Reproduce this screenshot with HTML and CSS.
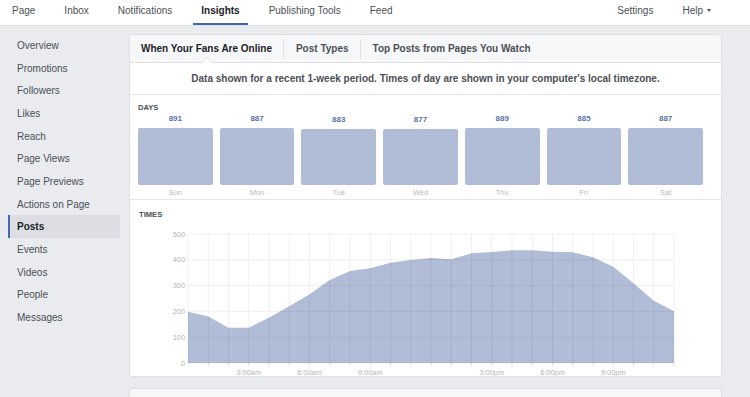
FILE: index.html
```html
<!DOCTYPE html>
<html lang="en">
<head>
    <meta charset="UTF-8">
    <meta name="viewport" content="width=device-width, initial-scale=1.0">
    <title>Insights</title>
    <link rel="stylesheet" href="styles.css">
</head>
<body>
    <nav class="topbar">
        <div class="topbar-group">
            <a class="nav-item">Page</a>
            <a class="nav-item">Inbox</a>
            <a class="nav-item">Notifications</a>
            <a class="nav-item active">Insights</a>
            <a class="nav-item">Publishing Tools</a>
            <a class="nav-item">Feed</a>
        </div>
        <div class="topbar-group">
            <a class="nav-item">Settings</a>
            <a class="nav-item">Help<span class="caret"></span></a>
        </div>
    </nav>

    <div class="main">
        <ul class="sidebar">
            <li>Overview</li>
            <li>Promotions</li>
            <li>Followers</li>
            <li>Likes</li>
            <li>Reach</li>
            <li>Page Views</li>
            <li>Page Previews</li>
            <li>Actions on Page</li>
            <li class="selected">Posts</li>
            <li>Events</li>
            <li>Videos</li>
            <li>People</li>
            <li>Messages</li>
        </ul>

        <div class="content">
            <div class="card">
                <div class="tabs">
                    <div class="tab active">When Your Fans Are Online</div>
                    <span class="tab-sep"></span>
                    <div class="tab">Post Types</div>
                    <span class="tab-sep"></span>
                    <div class="tab">Top Posts from Pages You Watch</div>
                </div>

                <div class="info">Data shown for a recent 1-week period. Times of day are shown in your computer's local timezone.</div>

                <div class="days">
                    <div class="section-label">DAYS</div>
                    <div class="day-bars">
                        <div class="day">
                            <div class="day-plot"><span class="day-value">891</span><div class="day-bar" style="height:57px"></div></div>
                            <span class="day-name">Sun</span>
                        </div>
                        <div class="day">
                            <div class="day-plot"><span class="day-value">887</span><div class="day-bar" style="height:56.7px"></div></div>
                            <span class="day-name">Mon</span>
                        </div>
                        <div class="day">
                            <div class="day-plot"><span class="day-value">883</span><div class="day-bar" style="height:56.5px"></div></div>
                            <span class="day-name">Tue</span>
                        </div>
                        <div class="day">
                            <div class="day-plot"><span class="day-value">877</span><div class="day-bar" style="height:56.1px"></div></div>
                            <span class="day-name">Wed</span>
                        </div>
                        <div class="day">
                            <div class="day-plot"><span class="day-value">889</span><div class="day-bar" style="height:56.9px"></div></div>
                            <span class="day-name">Thu</span>
                        </div>
                        <div class="day">
                            <div class="day-plot"><span class="day-value">885</span><div class="day-bar" style="height:56.6px"></div></div>
                            <span class="day-name">Fri</span>
                        </div>
                        <div class="day">
                            <div class="day-plot"><span class="day-value">887</span><div class="day-bar" style="height:56.7px"></div></div>
                            <span class="day-name">Sat</span>
                        </div>
                    </div>
                </div>

                <div class="times">
                    <div class="section-label">TIMES</div>
                    <svg class="times-chart" width="591" height="157" viewBox="0 0 591 157">
                        <!-- area -->
                        <polygon class="area" points="58,144 58,92.66 78.25,97.56 98.5,108.65 118.75,108.65 139,98.85 159.25,87.24 179.5,75.37 199.75,60.92 220,51.89 240.25,49.31 260.5,43.64 280.75,41.06 301,38.99 321.25,40.28 341.5,34.35 361.75,33.06 382,31.25 402.25,31.25 422.5,32.8 442.75,33.32 463,38.22 483.25,47.77 503.5,64.28 523.75,81.82 544,92.14 544,144"/>
                        <g id="grid" class="grid"></g>
                        <g class="y-labels">
                            <text x="55" y="15" dy="0.35em">500</text>
                            <text x="55" y="40.8" dy="0.35em">400</text>
                            <text x="55" y="66.6" dy="0.35em">300</text>
                            <text x="55" y="92.4" dy="0.35em">200</text>
                            <text x="55" y="118.2" dy="0.35em">100</text>
                            <text x="55" y="144" dy="0.35em">0</text>
                        </g>
                        <g class="x-labels">
                            <text x="118.75" y="155.5">3:00am</text>
                            <text x="179.5" y="155.5">6:00am</text>
                            <text x="240.25" y="155.5">9:00am</text>
                            <text x="361.75" y="155.5">3:00pm</text>
                            <text x="422.5" y="155.5">6:00pm</text>
                            <text x="483.25" y="155.5">9:00pm</text>
                        </g>
                    </svg>
                </div>
            </div>

            <div class="card card-next"></div>
        </div>
    </div>

    <script>
        // hour grid + ticks
        const grid = document.getElementById('grid');
        const ns = 'http://www.w3.org/2000/svg';

        function addLine(x1, y1, x2, y2, cls) {
            const line = document.createElementNS(ns, 'line');
            line.setAttribute('x1', x1);
            line.setAttribute('y1', y1);
            line.setAttribute('x2', x2);
            line.setAttribute('y2', y2);
            line.setAttribute('class', cls);
            grid.appendChild(line);
        }

        for (let h = 0; h <= 24; h++) {
            const x = 58 + h * 20.25;
            addLine(x, 15, x, 144, 'grid-line');
            addLine(x, 144, x, 147, 'tick');
        }

        for (let v = 0; v <= 500; v += 100) {
            const y = 144 - v * 0.258;
            addLine(58, y, 544, y, 'grid-line');
        }
    </script>
</body>
</html>
```

FILE: styles.css
```css
html,
body {
    overflow: hidden;
}

body {
    margin: 0;
    background-color: #e9ebee;
    font-family: "Liberation Sans", Arial, sans-serif;
    font-size: 10px;
    color: #4b4f56;
}

.topbar {
    display: flex;
    justify-content: space-between;
    height: 25px;
    padding: 0 31px 0 4px;
    background-color: #fff;
    border-bottom: 1px solid #dddfe2;
}

.topbar-group {
    display: flex;
    gap: 13px;
}

.nav-item {
    display: block;
    box-sizing: border-box;
    height: 25px;
    padding: 6px 8px 0;
    line-height: 10px;
    color: #4b4f56;
    cursor: pointer;
}

.nav-item.active {
    font-weight: bold;
    color: #1d2129;
    border-bottom: 2px solid #4267b2;
}

.caret {
    display: inline-block;
    margin-left: 4px;
    vertical-align: 2px;
    border-left: 2.5px solid transparent;
    border-right: 2.5px solid transparent;
    border-top: 3px solid #4b4f56;
}

.main {
    display: flex;
    gap: 9px;
    padding: 8px 0 0 8px;
}

.sidebar {
    width: 112px;
    margin: 0;
    padding: 0;
    list-style: none;
}

.sidebar li {
    height: 22.67px;
    line-height: 23.5px;
    padding-left: 7px;
    border-left: 2px solid transparent;
    cursor: pointer;
}

.sidebar li.selected {
    background-color: #dcdee3;
    border-left-color: #4267b2;
    font-weight: bold;
    color: #1d2129;
}

.content {
    width: 593px;
}

.card {
    box-sizing: border-box;
    background-color: #fff;
    border: 1px solid #dddfe2;
    border-radius: 3px;
}

.tabs {
    display: flex;
    align-items: center;
    height: 27px;
    background-color: #f6f7f9;
    border-bottom: 1px solid #dddfe2;
    border-radius: 3px 3px 0 0;
}

.tab {
    position: relative;
    padding: 0 11.5px;
    line-height: 27px;
    font-weight: bold;
    color: #4b4f56;
    cursor: pointer;
}

.tab:first-child {
    padding-left: 11px;
}

.tab.active {
    color: #1d2129;
}

.tab.active::before,
.tab.active::after {
    content: "";
    position: absolute;
    left: 50%;
    border-style: solid;
    border-color: transparent;
    border-top: 0;
}

.tab.active::before {
    bottom: -1px;
    margin-left: -6px;
    border-width: 0 6px 6px;
    border-bottom-color: #dddfe2;
}

.tab.active::after {
    bottom: -1px;
    margin-left: -5px;
    border-width: 0 5px 5px;
    border-bottom-color: #fff;
}

.tab-sep {
    width: 1px;
    height: 20px;
    background-color: #dddfe2;
}

.info {
    height: 31px;
    line-height: 31px;
    text-align: center;
    font-weight: bold;
    color: #4b4f56;
    border-bottom: 1px solid #e5e6e9;
}

.section-label {
    font-size: 7.6px;
    font-weight: bold;
    color: #4b4f56;
}

.days {
    padding: 8px 18px 1px 8px;
    border-bottom: 1px solid #e5e6e9;
}

.days .section-label {
    line-height: 10px;
}

.day-bars {
    display: grid;
    grid-template-columns: repeat(7, 1fr);
    gap: 7px;
}

.day {
    display: flex;
    flex-direction: column;
}

.day-plot {
    display: flex;
    flex-direction: column;
    justify-content: flex-end;
    height: 72px;
}

.day-value {
    margin-bottom: 4px;
    line-height: 10px;
    text-align: center;
    font-size: 8px;
    font-weight: bold;
    color: #5b72a6;
}

.day-bar {
    background-color: #b1bcd7;
    border-radius: 2px;
}

.day-name {
    margin-top: 3px;
    line-height: 10px;
    text-align: center;
    font-size: 7.4px;
    color: #b5b9c0;
}

.times {
    padding-top: 10px;
}

.times .section-label {
    line-height: 9px;
    padding-left: 9px;
}

.times-chart {
    display: block;
}

.area {
    fill: #b1bcd7;
}

.grid-line {
    stroke: #000;
    stroke-opacity: 0.06;
    stroke-width: 1;
}

.tick {
    stroke: #dcdee2;
    stroke-width: 1;
}

.y-labels text,
.x-labels text {
    font-family: "Liberation Sans", Arial, sans-serif;
    font-size: 7.4px;
    fill: #b0b4bb;
}

.y-labels text {
    text-anchor: end;
}

.x-labels text {
    text-anchor: middle;
}

.card-next {
    height: 9px;
    margin-top: 11px;
    border-bottom: 0;
    border-radius: 3px 3px 0 0;
    background-color: #f6f7f9;
}
```
